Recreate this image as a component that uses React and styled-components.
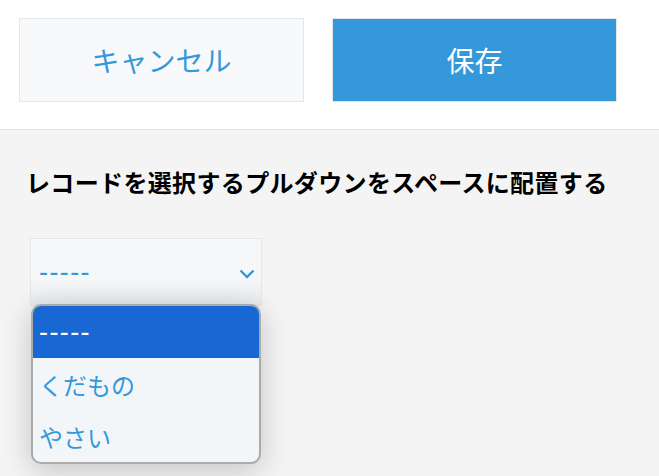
import React from 'react';
import styled, { createGlobalStyle } from 'styled-components';

const GlobalStyle = createGlobalStyle`
  body {
    margin: 0;
    background: #f4f4f4;
    font-family: "Noto Sans CJK JP", "Noto Sans", sans-serif;
  }
`;

const Page = styled.div`
  width: 659px;
  height: 476px;
  overflow: hidden;
  background: #f4f4f4;
`;

const Header = styled.div`
  display: flex;
  gap: 28px;
  height: 130px;
  box-sizing: border-box;
  padding: 18px 0 0 19px;
  background: #fff;
  border-bottom: 1px solid #e3e3e3;
`;

const Button = styled.button`
  width: 285px;
  height: 84px;
  border: 1px solid #e3e7e8;
  background: ${p => (p.$primary ? '#3498db' : '#f7f9fa')};
  color: ${p => (p.$primary ? '#fff' : '#3498db')};
  font-family: "Noto Sans CJK JP", sans-serif;
  font-size: 28px;
  padding: 0;
  cursor: pointer;
`;

const Body = styled.div`
  padding: 34px 0 0 26px;
`;

const Title = styled.h2`
  margin: 0;
  font-size: 24px;
  line-height: 36px;
  font-weight: 700;
  letter-spacing: 0.35px;
  color: #000;
`;

const SelectWrap = styled.div`
  position: relative;
  margin: 38px 0 0 4px;
  width: 232px;
`;

const SelectBox = styled.div`
  display: flex;
  align-items: center;
  justify-content: space-between;
  height: 68px;
  box-sizing: border-box;
  padding: 0 6px 0 8px;
  border: 1px solid #e3e7e8;
  background: linear-gradient(#f5f7f8, #f5f7f8 60%, #e8eaeb);
  color: #3498db;
  font-size: 24px;
`;

const Dashes = styled.span`
  font-family: "Liberation Sans", sans-serif;
  font-size: 27px;
  letter-spacing: 1.4px;
`;

const ChevronWrap = styled.span`
  display: flex;
  margin-top: 3px;
`;

const Menu = styled.ul`
  position: absolute;
  top: 66px;
  left: 1px;
  width: 230px;
  margin: 0;
  padding: 0;
  list-style: none;
  box-sizing: border-box;
  border: 2px solid #ababab;
  border-radius: 10px;
  overflow: hidden;
  background: #f3f6f8;
  box-shadow: 0 6px 30px rgba(0, 0, 0, 0.2);
`;

const Option = styled.li`
  height: 52px;
  display: flex;
  align-items: center;
  padding: 0 6px;
  font-size: 24px;
  color: ${p => (p.$active ? '#fff' : '#3498db')};
  background: ${p => (p.$active ? '#1967d2' : 'transparent')};
`;

const Chevron = () => (
  <svg width="16" height="10" viewBox="0 0 16 10">
    <path d="M1.5 1.5 L8 8 L14.5 1.5" fill="none" stroke="#3498db" strokeWidth="2.4" />
  </svg>
);

export default function App() {
  return (
    <Page>
      <GlobalStyle />
      <Header>
        <Button>キャンセル</Button>
        <Button $primary>保存</Button>
      </Header>
      <Body>
        <Title>レコードを選択するプルダウンをスペースに配置する</Title>
        <SelectWrap>
          <SelectBox>
            <Dashes>-----</Dashes>
            <ChevronWrap>
              <Chevron />
            </ChevronWrap>
          </SelectBox>
          <Menu>
            <Option $active>
              <Dashes>-----</Dashes>
            </Option>
            <Option>くだもの</Option>
            <Option>やさい</Option>
          </Menu>
        </SelectWrap>
      </Body>
    </Page>
  );
}
